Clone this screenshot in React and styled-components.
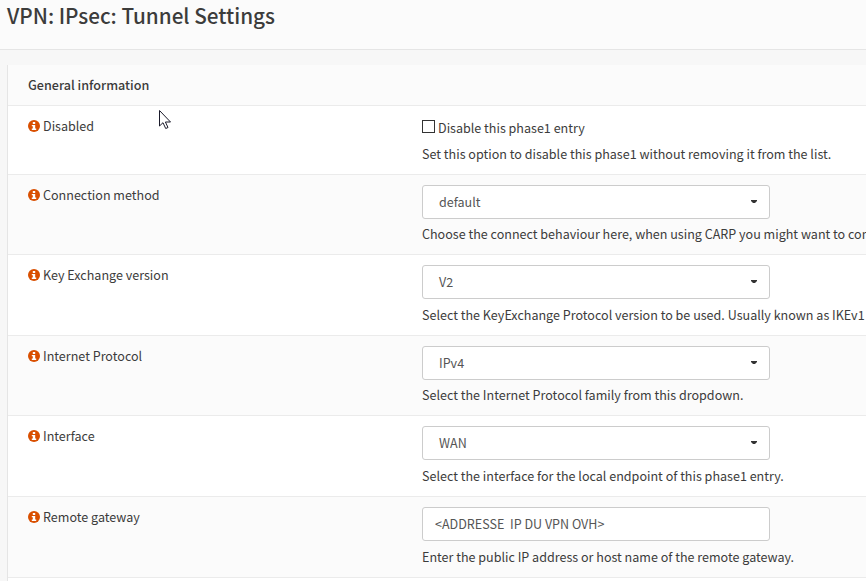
import React from "react";
import styled, { createGlobalStyle } from "styled-components";

const GlobalStyle = createGlobalStyle`
  * { box-sizing: border-box; }
  body {
    margin: 0;
    background: #f7f7f7;
    overflow: hidden;
    color: #3c3c3b;
    font-family: "Noto Sans CJK SC", "Open Sans", sans-serif;
    font-size: 12.56px;
  }
`;

const Page = styled.div`
  height: 581px;
  overflow: hidden;
`;

const PageHeader = styled.header`
  height: 50px;
  padding-left: 7px;
  background: #fbfbfb;
  border-bottom: 1px solid #e5e5e5;
`;

const Title = styled.h1`
  margin: 0;
  font-size: 20.7px;
  font-weight: 500;
  line-height: 30px;
  white-space: nowrap;
`;

const Panel = styled.section`
  margin: 15px 0 0 7px;
  border-left: 1px solid #e5e5e5;
  background: #fff;
`;

const PanelHeading = styled.h2`
  margin: 0;
  height: 40px;
  padding-left: 20px;
  background: #fbfbfb;
  font-size: 12.6px;
  font-weight: 500;
  line-height: 40px;
`;

const Row = styled.div`
  display: grid;
  grid-template-columns: 394px 1fr;
  height: ${(p) => p.$height}px;
  padding: 10px 0 0 20px;
  border-top: 1px solid #ebebeb;
  background: ${(p) => (p.$shaded ? "#fbfbfb" : "#fff")};
`;

const Label = styled.div`
  display: flex;
  align-items: center;
  gap: 3px;
  height: 20px;
  white-space: nowrap;
`;

const Text = styled.span`
  line-height: 20px;
`;

const Field = styled.div`
  min-width: 0;
`;

const Help = styled.div`
  height: 20px;
  margin-top: ${(p) => p.$gap}px;
  line-height: 20px;
  white-space: nowrap;
`;

const CheckLine = styled.label`
  display: flex;
  align-items: center;
  gap: 3px;
  height: 20px;
  margin-top: 2px;
`;

const CheckBox = styled.input`
  appearance: none;
  width: 13px;
  height: 13px;
  margin: 0 0 3px;
  border: 1px solid #333;
  background: #fff;
`;

const Select = styled.div`
  display: flex;
  align-items: center;
  justify-content: space-between;
  width: 348px;
  height: 34px;
  padding: 0 12px 0 16px;
  border: 1px solid #ccc;
  border-radius: 3px;
  background: #fff;
  color: #555;
`;

const Input = styled.input`
  display: block;
  width: 348px;
  height: 34px;
  padding: 0 12px 2px;
  border: 1px solid #ccc;
  border-radius: 3px;
  background: #fff;
  color: #555;
  font: inherit;
`;

const CaretMark = styled.svg`
  display: block;
  width: 6px;
  height: 3px;
  margin-bottom: 1px;
  fill: #333;
`;

const InfoMark = styled.svg`
  display: block;
  width: 12px;
  height: 12px;
  fill: #d94f00;
`;

const Pointer = styled.svg`
  position: absolute;
  left: 159px;
  top: 110px;
  width: 13px;
  height: 20px;
`;

const InfoIcon = () => (
  <InfoMark viewBox="0 0 12 12">
    <circle cx="6" cy="6" r="6" />
    <path d="M4.800 2h2.400v2H4.800zM3.800 5h3.400v3.600h1V10H3.800V8.600h1V6.300h-1z" fill="#fff" />
  </InfoMark>
);

const Caret = () => (
  <CaretMark viewBox="0 0 6 3">
    <path d="M0 0h6v1L4 3H2L0 1z" />
  </CaretMark>
);

const rows = [
  { label: "Disabled", kind: "check", value: "Disable this phase1 entry", help: "Set this option to disable this phase1 without removing it from the list.", height: 69, gap: 6 },
  { label: "Connection method", kind: "select", value: "default", help: "Choose the connect behaviour here, when using CARP you might want to con", height: 80, gap: 5 },
  { label: "Key Exchange version", kind: "select", value: "V2", help: "Select the KeyExchange Protocol version to be used. Usually known as IKEv1", height: 81, gap: 6 },
  { label: "Internet Protocol", kind: "select", value: "IPv4", help: "Select the Internet Protocol family from this dropdown.", height: 80, gap: 5 },
  { label: "Interface", kind: "select", value: "WAN", help: "Select the interface for the local endpoint of this phase1 entry.", height: 81, gap: 6 },
  { label: "Remote gateway", kind: "input", value: "<ADDRESSE  IP DU VPN OVH>", help: "Enter the public IP address or host name of the remote gateway.", height: 81, gap: 6 },
];

const Control = ({ kind, value }) => {
  if (kind === "check") {
    return (
      <CheckLine>
        <CheckBox type="checkbox" />
        <Text>{value}</Text>
      </CheckLine>
    );
  }
  if (kind === "input") return <Input defaultValue={value} />;
  return (
    <Select>
      <Text>{value}</Text>
      <Caret />
    </Select>
  );
};

export default function App() {
  return (
    <Page>
      <GlobalStyle />
      <PageHeader>
        <Title>VPN: IPsec: Tunnel Settings</Title>
      </PageHeader>
      <Panel>
        <PanelHeading>General information</PanelHeading>
        {rows.map((row, i) => (
          <Row key={row.label} $height={row.height} $shaded={i % 2 === 1}>
            <Label>
              <InfoIcon />
              <Text>{row.label}</Text>
            </Label>
            <Field>
              <Control kind={row.kind} value={row.value} />
              <Help $gap={row.gap}>{row.help}</Help>
            </Field>
          </Row>
        ))}
        <Row $height={20} />
      </Panel>
      <Pointer viewBox="0 0 13 20">
        <path d="M.5.500v15.500l3.500-3.300 2.700 5.800 2.300-1-2.600-5.500h5.100z" fill="#fff" stroke="#1a1a2a" strokeWidth="1" />
      </Pointer>
    </Page>
  );
}
